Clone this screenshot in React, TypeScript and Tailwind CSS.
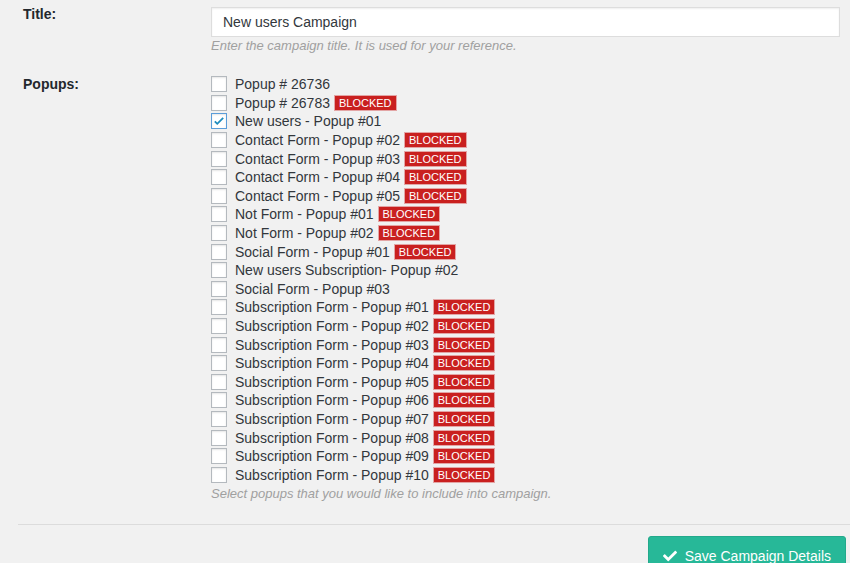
import { FaCheck } from 'react-icons/fa';

type Popup = { name: string; blocked?: boolean; checked?: boolean };

const popups: Popup[] = [
  { name: 'Popup # 26736' },
  { name: 'Popup # 26783', blocked: true },
  { name: 'New users - Popup #01', checked: true },
  { name: 'Contact Form - Popup #02', blocked: true },
  { name: 'Contact Form - Popup #03', blocked: true },
  { name: 'Contact Form - Popup #04', blocked: true },
  { name: 'Contact Form - Popup #05', blocked: true },
  { name: 'Not Form - Popup #01', blocked: true },
  { name: 'Not Form - Popup #02', blocked: true },
  { name: 'Social Form - Popup #01', blocked: true },
  { name: 'New users Subscription- Popup #02' },
  { name: 'Social Form - Popup #03' },
  { name: 'Subscription Form - Popup #01', blocked: true },
  { name: 'Subscription Form - Popup #02', blocked: true },
  { name: 'Subscription Form - Popup #03', blocked: true },
  { name: 'Subscription Form - Popup #04', blocked: true },
  { name: 'Subscription Form - Popup #05', blocked: true },
  { name: 'Subscription Form - Popup #06', blocked: true },
  { name: 'Subscription Form - Popup #07', blocked: true },
  { name: 'Subscription Form - Popup #08', blocked: true },
  { name: 'Subscription Form - Popup #09', blocked: true },
  { name: 'Subscription Form - Popup #10', blocked: true },
];

/** WP-admin style checkbox */
function Checkbox({ checked }: { checked?: boolean }) {
  return (
    <span
      className={
        'w-[16px] h-[16px] shrink-0 mr-[8px] bg-white border flex items-center justify-center shadow-[inset_0_1px_2px_rgba(0,0,0,0.1)] ' +
        (checked ? 'border-[#5b9dd9]' : 'border-[#b4b9be]')
      }
    >
      {checked && (
        <svg width="14" height="14" viewBox="0 0 20 20">
          <path d="M4 10.5l3.5 3.5L16 5.5" fill="none" stroke="#1e8cbe" strokeWidth="2.6" />
        </svg>
      )}
    </span>
  );
}

export default function App() {
  return (
    <div className="w-[850px] h-[563px] overflow-hidden bg-[#f1f1f1] font-['Liberation_Sans',Arial,sans-serif] text-[14px] text-[#32373c]">
      <div className="flex pt-[4px]">
        <div className="w-[211px] shrink-0 pl-[23px] font-bold text-[#23282d] leading-[20px]">Title:</div>
        <div className="flex-1 pr-[10px]">
          <div className="mt-[3px] h-[30px] bg-white border border-[#dddddd] shadow-[inset_0_1px_2px_rgba(0,0,0,0.07)] flex items-center px-[11px] text-[#32373c]">
            New users Campaign
          </div>
          <div className="mt-[1px] leading-[16px] text-[13px] italic text-[#a0a0a0]">
            Enter the campaign title. It is used for your reference.
          </div>
        </div>
      </div>

      <div className="flex mt-[21px]">
        <div className="w-[211px] shrink-0 pl-[23px] font-bold text-[#23282d] leading-[18.6px]">Popups:</div>
        <div className="flex-1">
          {popups.map((p) => (
            <div key={p.name} className="h-[18.6px] flex items-center">
              <Checkbox checked={p.checked} />
              <span className="leading-[18px] whitespace-nowrap">{p.name}</span>
              {p.blocked && (
                <span className="ml-[4px] bg-[#c9201f] border border-[#e3a5a5] text-white text-[11px] leading-[14px] px-[4px]">
                  BLOCKED
                </span>
              )}
            </div>
          ))}
          <div className="mt-[2px] leading-[16px] text-[13px] italic text-[#a0a0a0]">
            Select popups that you would like to include into campaign.
          </div>
        </div>
      </div>

      <div className="ml-[18px] mt-[22px] border-t border-[#dcdcdc]" />

      <div className="flex justify-end pr-[4px] mt-[11px]">
        <button className="flex items-center gap-[8px] h-[40px] pl-[14px] pr-[14px] bg-[#27b898] border border-[#23a98b] rounded-[3px] text-white text-[14px]">
          <FaCheck className="w-[14px] h-[14px]" />
          Save Campaign Details
        </button>
      </div>
    </div>
  );
}
